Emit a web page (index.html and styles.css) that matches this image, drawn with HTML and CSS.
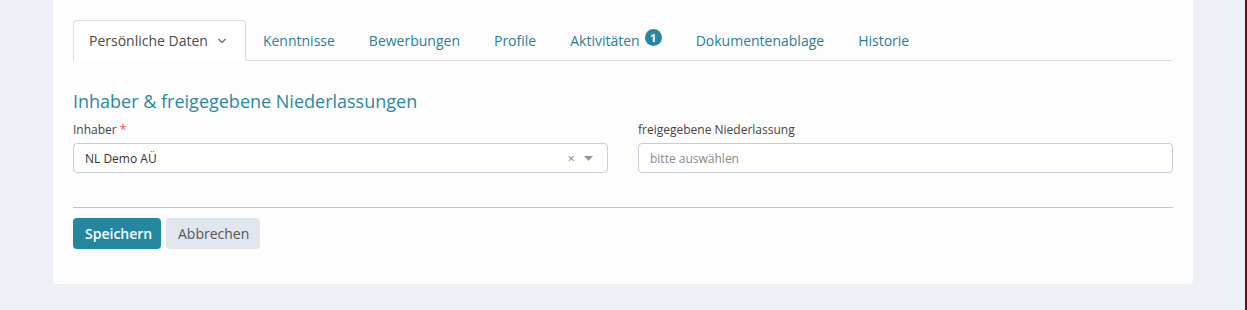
FILE: index.html
```html
<!DOCTYPE html>
<html lang="de">
<head>
    <meta charset="UTF-8">
    <title>Persönliche Daten</title>
    <link rel="stylesheet" href="styles.css">
</head>
<body>
    <div class="page">
        <div class="card">
            <ul class="tabs">
                <li class="tab active">Persönliche Daten
                    <svg class="chevron" width="10" height="6" viewBox="0 0 10 6"><path d="M1.5 1 L5 4.5 L8.5 1" fill="none" stroke="#666" stroke-width="1.2"/></svg>
                </li>
                <li class="tab">Kenntnisse</li>
                <li class="tab">Bewerbungen</li>
                <li class="tab">Profile</li>
                <li class="tab">Aktivitäten <span class="badge">1</span></li>
                <li class="tab">Dokumentenablage</li>
                <li class="tab">Historie</li>
            </ul>

            <h2 class="section-title">Inhaber &amp; freigegebene Niederlassungen</h2>

            <div class="form-row">
                <div class="form-group">
                    <label class="form-label">Inhaber <span class="required">*</span></label>
                    <div class="select-box">
                        <span class="select-value">NL Demo AÜ</span>
                        <span class="select-clear">×</span>
                        <svg class="select-arrow" width="9" height="5" viewBox="0 0 9 5"><path d="M0 0 L9 0 L4.5 5 Z" fill="#999"/></svg>
                    </div>
                </div>
                <div class="form-group">
                    <label class="form-label">freigegebene Niederlassung</label>
                    <div class="select-box">
                        <span class="select-placeholder">bitte auswählen</span>
                    </div>
                </div>
            </div>

            <hr class="divider">

            <div class="actions">
                <button class="btn btn-primary">Speichern</button>
                <button class="btn btn-secondary">Abbrechen</button>
            </div>
        </div>
    </div>
</body>
</html>
```

FILE: styles.css
```css
* {
    box-sizing: border-box;
}

html, body {
    margin: 0;
    height: 100%;
    overflow: hidden;
}

body {
    font-family: "Open Sans", Arial, sans-serif;
    font-size: 14px;
    color: #4a4a4a;
    background: #edf1f6;
    border-right: 2px solid #5a1414;
}

.page {
    padding: 0 52px 0 53px;
}

.card {
    width: 1140px;
    background: #fdfdfd;
    border-radius: 0 0 4px 4px;
    padding: 20px 20px 35px;
}

.tabs {
    list-style: none;
    margin: 0;
    padding: 0;
    display: flex;
    border-bottom: 1px solid #dedede;
    width: 1099px;
}

.tab {
    padding: 9px 16px;
    border: 1px solid transparent;
    border-top-left-radius: 4px;
    border-top-right-radius: 4px;
    margin-bottom: -1px;
    color: #2a7f98;
    line-height: 21px;
    display: flex;
    align-items: center;
}

.tab.active {
    padding-left: 15px;
    padding-right: 18px;
    color: #4a4a4a;
    background: #fff;
    border-color: #dedede #dedede #fff;
}

.chevron {
    margin-left: 9px;
    margin-top: 1px;
}

.badge {
    display: inline-flex;
    align-items: center;
    justify-content: center;
    width: 17px;
    height: 17px;
    margin-left: 5px;
    margin-top: -6px;
    border-radius: 50%;
    background: #23889f;
    color: #fff;
    font-size: 11px;
    font-weight: 700;
}

.section-title {
    margin: 30px 0 0;
    font-size: 18px;
    font-weight: 400;
    line-height: 20px;
    color: #2a89a1;
}

.form-row {
    display: flex;
    gap: 30px;
    margin-top: 10px;
}

.form-group {
    flex: 1;
}

.form-label {
    display: block;
    font-size: 12px;
    line-height: 18px;
    color: #444;
    margin-bottom: 4px;
}

.required {
    color: #e8505b;
}

.select-box {
    height: 30px;
    border: 1px solid #c6cdd8;
    border-radius: 4px;
    background: #fff;
    display: flex;
    align-items: center;
    padding: 0 12px 0 11px;
    font-size: 12px;
}

.select-value {
    flex: 1;
    color: #333;
}

.select-placeholder {
    color: #888;
}

.select-clear {
    color: #888;
    font-size: 13px;
    margin-right: 9px;
}

.select-arrow {
    margin-right: 2px;
}

.divider {
    border: none;
    border-top: 1px solid #c4c4c4;
    margin: 34px 0 10px;
}

.actions {
    display: flex;
    gap: 5px;
}

.btn {
    font-family: "Open Sans", Arial, sans-serif;
    font-size: 14px;
    height: 31px;
    border: none;
    border-radius: 4px;
    padding: 0 12px;
    cursor: pointer;
}

.btn-primary {
    background: #23889e;
    color: #fff;
    font-weight: 600;
    width: 88px;
}

.btn-secondary {
    background: #e1e5ed;
    color: #555;
    width: 94px;
}
```
